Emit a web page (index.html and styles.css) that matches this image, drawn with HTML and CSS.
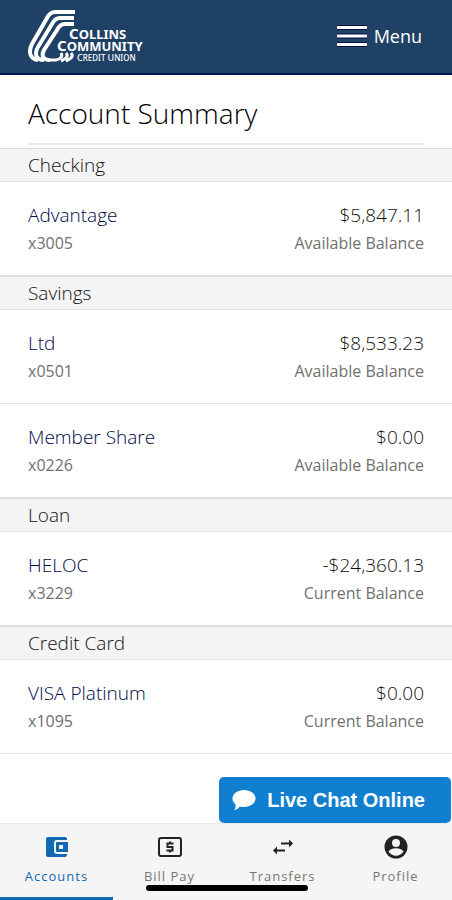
FILE: index.html
```
<!DOCTYPE html>
<html lang="en">
<head>
    <meta charset="UTF-8">
    <meta name="viewport" content="width=device-width, initial-scale=1.0">
    <title>Account Summary - Collins Community Credit Union</title>
    <link rel="stylesheet" href="styles.css">
</head>
<body>

<header class="top-bar">
    <a class="logo" href="#" aria-label="Collins Community Credit Union">
        <svg width="118" height="56" viewBox="0 0 118 56">
            <g fill="none" stroke="#fff" stroke-width="4">
                <path d="M47 4H27C23 4 21 6 19 10L4 36C0 44 2 51 10 52"/>
                <path d="M46 10H32C28 10 26 12 24 16L10 39C6 46 8 52 16 52"/>
                <path d="M46 16H37C33 16 31 18 29 22L16 42C13 48 15 52 22 52"/>
                <path d="M33 45C35 48 33 51 28 52H21" stroke-width="3"/>
                <path d="M38 45C41 48 38 51 33 53M43 45C46 48 43 51 38 53" stroke-width="3"/>
            </g>
            <g class="logo-text">
                <text x="41" y="31"><tspan class="cap">C</tspan>OLLINS</text>
                <text x="29" y="43"><tspan class="cap">C</tspan>OMMUNITY</text>
                <text class="small" x="49" y="53"><tspan class="small-cap">C</tspan>REDIT <tspan class="small-cap">U</tspan>NION</text>
            </g>
        </svg>
    </a>
    <button class="menu-button" type="button">
        <svg width="30" height="22" viewBox="0 0 30 22">
            <path d="M0 2.500H30M0 11H30M0 19.500H30" stroke="#00104f" stroke-width="5"/>
            <path d="M0 2.500H30M0 11H30M0 19.500H30" stroke="#fff" stroke-width="3"/>
        </svg>
        Menu
    </button>
</header>

<main class="content">
    <h1 class="page-title">Account Summary</h1>

    <section>
        <h2 class="group-title">Checking</h2>
        <div class="account">
            <a class="account-name" href="#">Advantage</a>
            <span class="amount">$5,847.11</span>
            <span class="detail">x3005</span>
            <span class="detail right">Available Balance</span>
        </div>
    </section>

    <section>
        <h2 class="group-title">Savings</h2>
        <div class="account">
            <a class="account-name" href="#">Ltd</a>
            <span class="amount">$8,533.23</span>
            <span class="detail">x0501</span>
            <span class="detail right">Available Balance</span>
        </div>
        <div class="account">
            <a class="account-name" href="#">Member Share</a>
            <span class="amount">$0.00</span>
            <span class="detail">x0226</span>
            <span class="detail right">Available Balance</span>
        </div>
    </section>

    <section>
        <h2 class="group-title">Loan</h2>
        <div class="account">
            <a class="account-name" href="#">HELOC</a>
            <span class="amount">-$24,360.13</span>
            <span class="detail">x3229</span>
            <span class="detail right">Current Balance</span>
        </div>
    </section>

    <section>
        <h2 class="group-title">Credit Card</h2>
        <div class="account">
            <a class="account-name" href="#">VISA Platinum</a>
            <span class="amount">$0.00</span>
            <span class="detail">x1095</span>
            <span class="detail right">Current Balance</span>
        </div>
    </section>
</main>

<footer class="bottom">
    <button class="chat-button" type="button">
        <svg width="24" height="22" viewBox="0 0 24 22">
            <path fill="#fff" d="M12 1C18.500 1 23.500 4.800 23.500 9.500S18.500 18 12 18C10.500 18 9 17.800 7.700 17.400C6.200 19.500 4.300 20.700 2.500 21C3.300 19.500 3.800 17.700 3.500 15.300C1.600 13.800 .5 11.800 .5 9.500C.5 4.800 5.500 1 12 1Z"/>
        </svg>
        Live Chat Online
    </button>

    <nav class="tabs">
        <a class="tab active" href="#">
            <svg width="24" height="24" viewBox="0 0 24 24">
                <path fill="currentColor" d="M3 2H20Q22 2 22 4V5H12Q9 5 9 8V16Q9 19 12 19H22V20Q22 22 20 22H3Q1 22 1 20V4Q1 2 3 2ZM12 7H23V17H12Q11 17 11 16V8Q11 7 12 7ZM14 10V14H18V10Z" fill-rule="evenodd"/>
            </svg>
            Accounts
        </a>
        <a class="tab" href="#">
            <svg width="24" height="24" viewBox="0 0 24 24">
                <rect x="1" y="3" width="22" height="18" rx="2" fill="none" stroke="#222" stroke-width="2"/>
                <path d="M15.500 8.500H9.500V12H14.500V15.500H8.500M12 6.500V8.500M12 15.500V17.500" fill="none" stroke="#222" stroke-width="2"/>
            </svg>
            Bill Pay
        </a>
        <a class="tab" href="#">
            <svg width="24" height="24" viewBox="0 0 24 24">
                <path d="M10 8.500H20M14 15.500H4" fill="none" stroke="#222" stroke-width="2"/>
                <path d="M18 4.500L22 8.500L18 12.500ZM6 11.500L2 15.500L6 19.500Z" fill="#222"/>
            </svg>
            Transfers
        </a>
        <a class="tab" href="#">
            <svg width="24" height="24" viewBox="0 0 24 24">
                <circle cx="12" cy="12" r="11.500" fill="#222"/>
                <circle cx="12" cy="8" r="4" fill="#f5f5f5"/>
                <path fill="#f5f5f5" d="M4.500 16.500C6 14.300 9 13.300 12 13.300S18 14.300 19.500 16.500C17.900 19 15.200 20.700 12 20.700S6.100 19 4.500 16.500Z"/>
            </svg>
            Profile
        </a>
    </nav>
    <div class="home-indicator"></div>
</footer>

</body>
</html>
```
FILE: styles.css
```
* {
    box-sizing: border-box;
}

body {
    margin: 0;
    min-height: 100vh;
    display: flex;
    flex-direction: column;
    background-color: #fff;
    color: #111;
    font-family: 'Open Sans', sans-serif;
}

a {
    color: inherit;
    text-decoration: none;
}

button {
    border: 0;
    padding: 0;
    color: #fff;
    display: flex;
    align-items: center;
    cursor: pointer;
}

svg {
    display: block;
}

.top-bar {
    display: flex;
    justify-content: space-between;
    align-items: center;
    padding: 0 30px 2px 28px;
    height: 75px;
    background-color: #1f4166;
    border-bottom: 2px solid #001458;
}

.logo-text {
    fill: #fff;
    font-family: 'Noto Sans', sans-serif;
    font-weight: bold;
    font-size: 13px;
}

.logo-text .cap {
    font-size: 15px;
}

.logo-text .small {
    font-size: 8px;
    font-weight: 500;
}

.logo-text .small-cap {
    font-size: 9px;
}

.menu-button {
    gap: 7px;
    background: none;
    font: 400 18px/24px 'Open Sans', sans-serif;
}

.content {
    flex: 1;
}

.page-title {
    margin: 0 28px 3px;
    padding: 22px 0 13px;
    border-bottom: 2px solid #ebebeb;
    color: #000;
    font-size: 28px;
    line-height: 33px;
    font-weight: 300;
}

.group-title {
    margin: 0;
    padding: 4px 28px;
    background-color: #f4f4f4;
    border-top: 1px solid #dedede;
    border-bottom: 1px solid #e4e4e4;
    font-size: 19px;
    line-height: 24px;
    font-weight: 300;
}

.account {
    display: grid;
    grid-template-columns: 1fr auto;
    row-gap: 2px;
    padding: 19px 28px 20px;
    border-bottom: 1px solid #e0e0e0;
}

.account-name,
.amount {
    font-size: 19px;
    line-height: 28px;
    font-weight: 300;
}

.account-name {
    color: #000848;
}

.amount,
.right {
    text-align: right;
}

.detail {
    color: #707070;
    font-size: 16px;
    line-height: 24px;
}

.bottom {
    position: sticky;
    bottom: 0;
}

.chat-button {
    position: absolute;
    right: 1px;
    bottom: 100%;
    gap: 11px;
    padding: 11px 26px 11px 13px;
    border-radius: 5px;
    background-color: #107fd0;
    font: bold 20px/24px 'Liberation Sans', sans-serif;
    white-space: nowrap;
}

.tabs {
    display: grid;
    grid-template-columns: repeat(4, 1fr);
    background-color: #f5f5f5;
    border-top: 1px solid #ebebeb;
}

.tab {
    display: flex;
    flex-direction: column;
    align-items: center;
    gap: 8px;
    padding: 11px 0 12px;
    border-bottom: 3px solid transparent;
    color: #777;
    font-size: 13px;
    line-height: 18px;
    letter-spacing: 1px;
}

.tab.active {
    color: #1168b3;
    border-bottom-color: #1168b3;
}

.home-indicator {
    position: absolute;
    left: 50%;
    bottom: 9px;
    width: 162px;
    height: 6px;
    margin-left: -80px;
    border-radius: 3px;
    background-color: #000;
}
```
